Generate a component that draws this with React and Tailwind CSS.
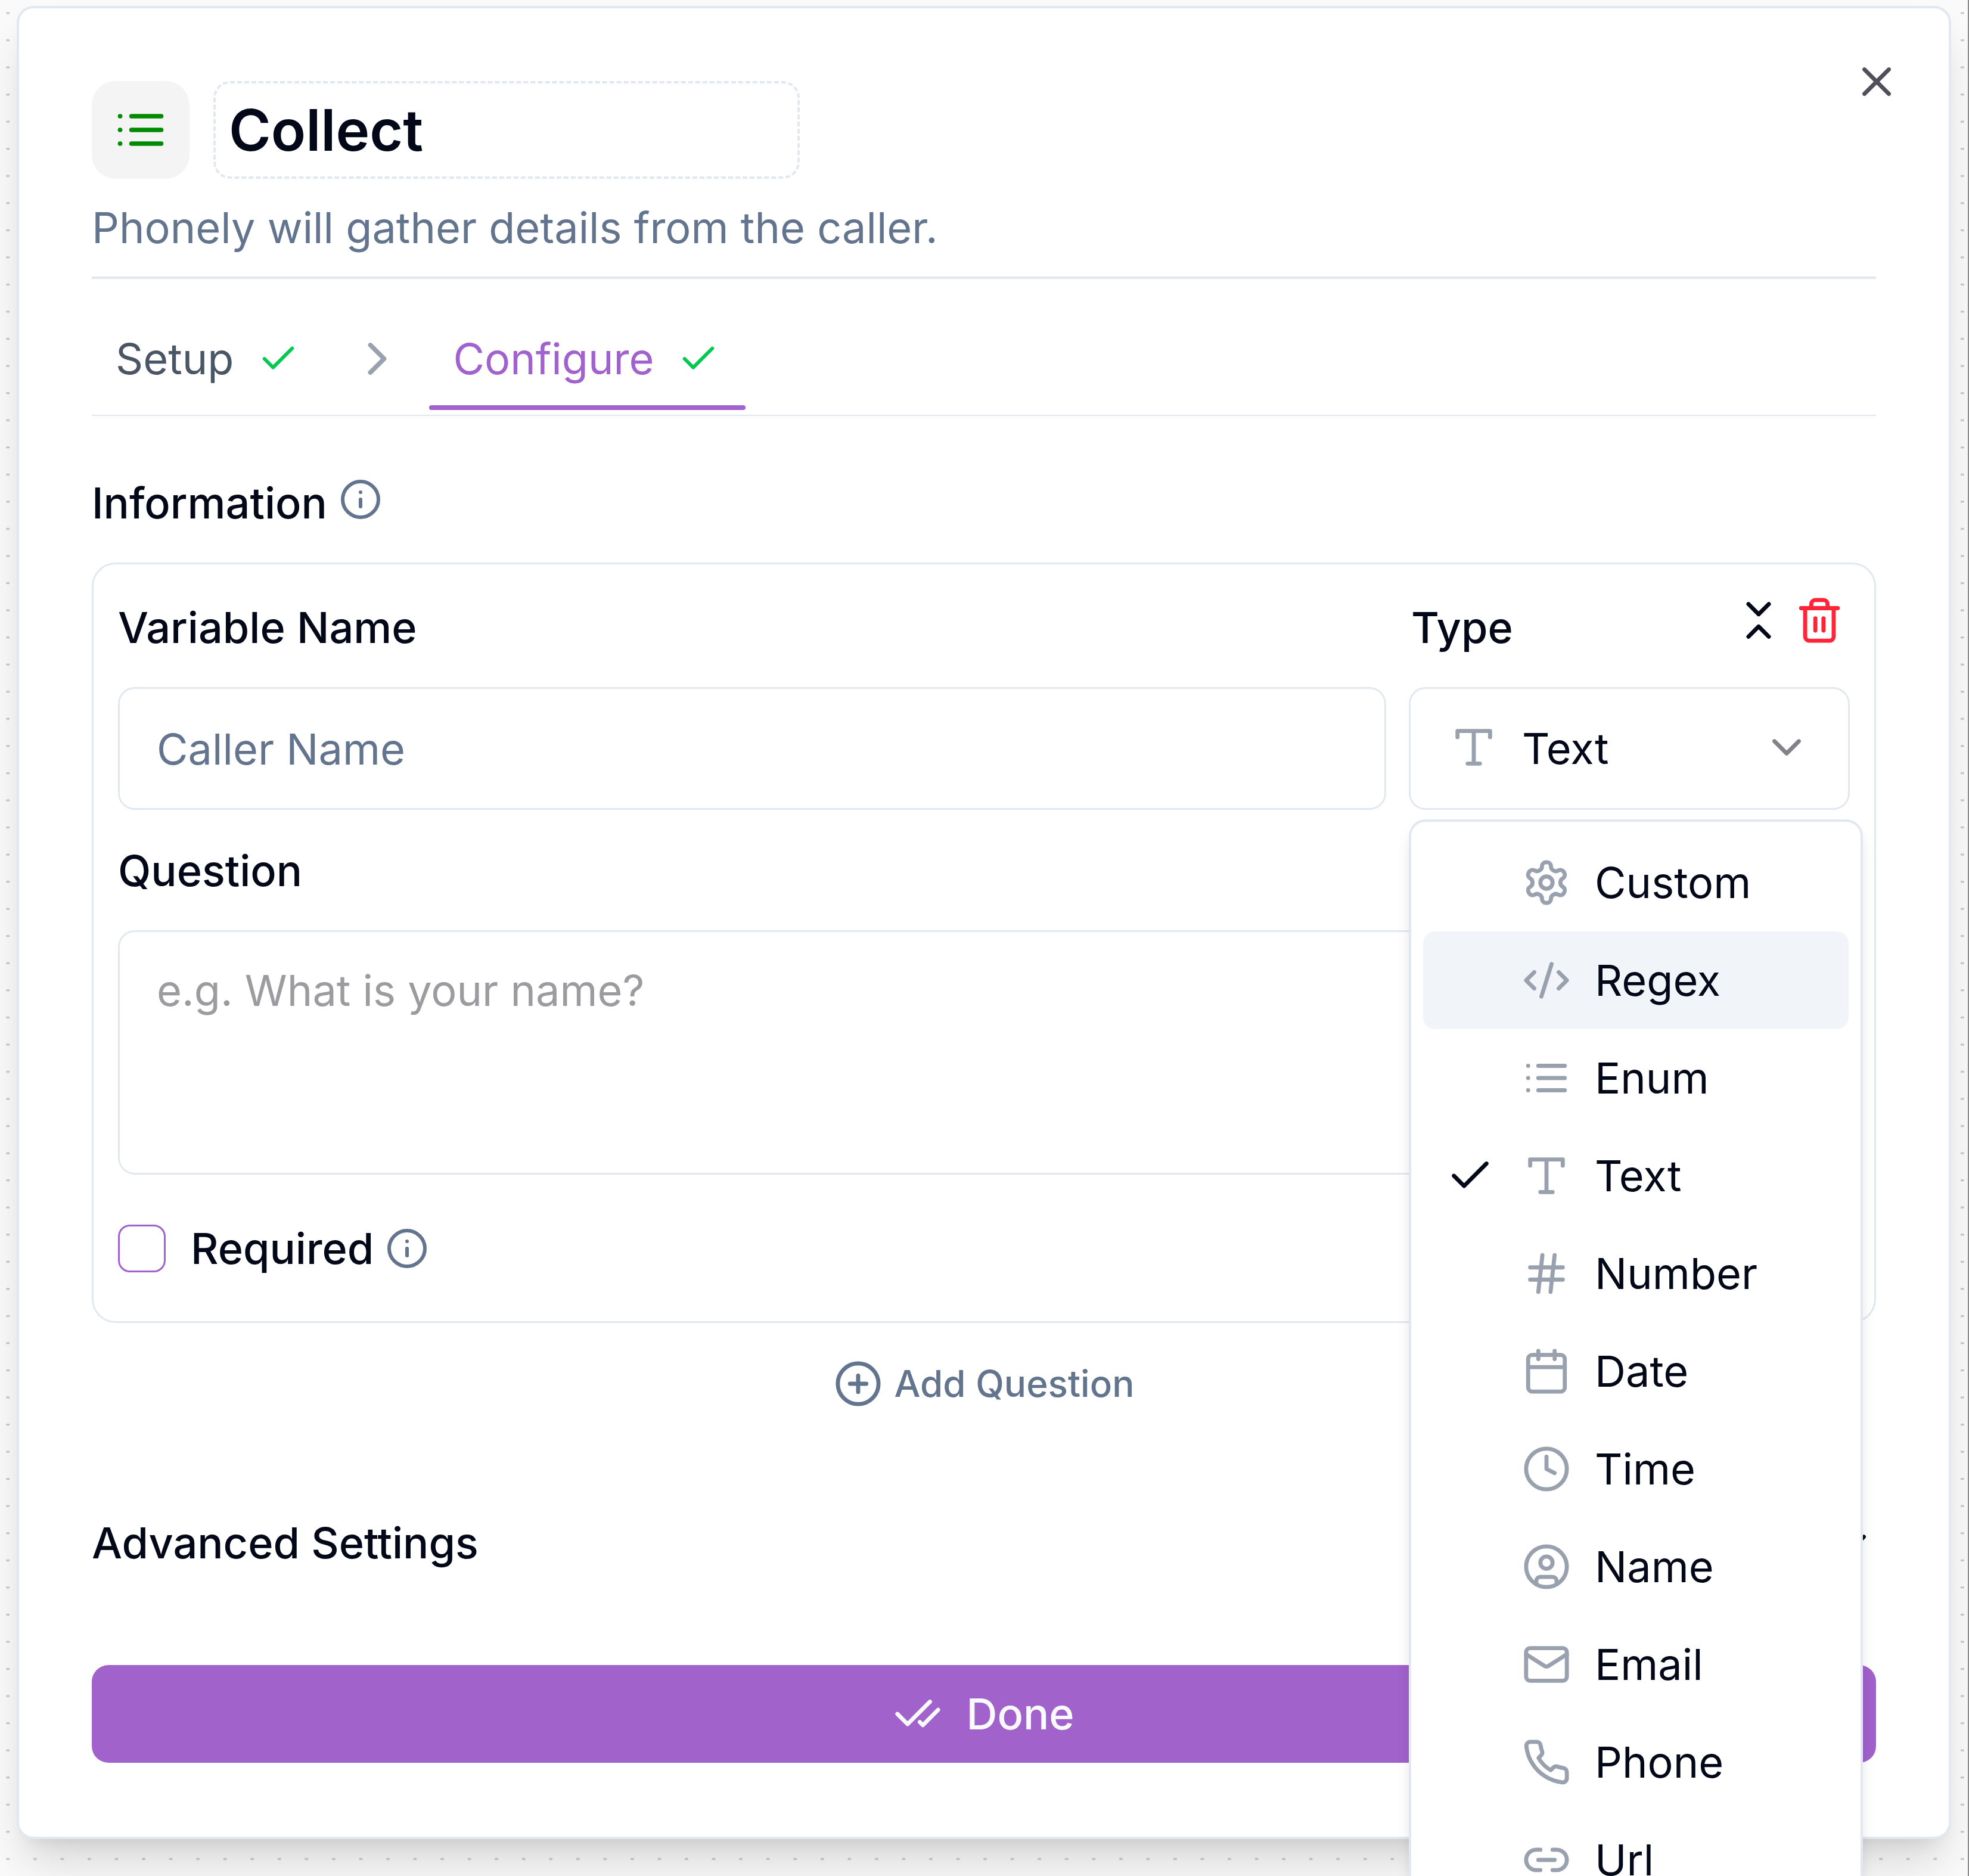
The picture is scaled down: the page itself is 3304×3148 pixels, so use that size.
import React, { useState } from "react";
import {
  Calendar,
  Check,
  CheckCheck,
  ChevronDown,
  ChevronRight,
  ChevronsDownUp,
  CirclePlus,
  CircleUser,
  Clock,
  CodeXml,
  Hash,
  Info,
  Link2,
  Mail,
  Trash2,
  X,
} from "lucide-react";

// Shared svg wrapper for the icons drawn by hand
const Icon = ({ className, children }) => (
  <svg
    viewBox="0 0 24 24"
    fill="none"
    stroke="currentColor"
    strokeWidth="2"
    strokeLinecap="round"
    strokeLinejoin="round"
    className={className}
    aria-hidden="true"
  >
    {children}
  </svg>
);

const ListIcon = ({ className }) => (
  <Icon className={className}>
    <path d="M3 6h.01M3 12h.01M3 18h.01M8 6h13M8 12h13M8 18h13" />
  </Icon>
);

const TypeIcon = ({ className }) => (
  <Icon className={className}>
    <path d="M4 7V4h16v3M9 20h6M12 4v16" />
  </Icon>
);

const GearIcon = ({ className }) => (
  <Icon className={className}>
    <path d="M12.22 2h-.44a2 2 0 0 0-2 2v.18a2 2 0 0 1-1 1.73l-.43.25a2 2 0 0 1-2 0l-.15-.08a2 2 0 0 0-2.73.73l-.22.38a2 2 0 0 0 .73 2.73l.15.1a2 2 0 0 1 1 1.72v.51a2 2 0 0 1-1 1.74l-.15.09a2 2 0 0 0-.73 2.73l.22.38a2 2 0 0 0 2.73.73l.15-.08a2 2 0 0 1 2 0l.43.25a2 2 0 0 1 1 1.73V20a2 2 0 0 0 2 2h.44a2 2 0 0 0 2-2v-.18a2 2 0 0 1 1-1.73l.43-.25a2 2 0 0 1 2 0l.15.08a2 2 0 0 0 2.73-.73l.22-.39a2 2 0 0 0-.73-2.73l-.15-.08a2 2 0 0 1-1-1.74v-.5a2 2 0 0 1 1-1.74l.15-.09a2 2 0 0 0 .73-2.73l-.22-.38a2 2 0 0 0-2.73-.73l-.15.08a2 2 0 0 1-2 0l-.43-.25a2 2 0 0 1-1-1.73V4a2 2 0 0 0-2-2z" />
    <circle cx="12" cy="12" r="3" />
  </Icon>
);

const PhoneIcon = ({ className }) => (
  <Icon className={className}>
    <path d="M22 16.92v3a2 2 0 0 1-2.18 2 19.79 19.79 0 0 1-8.63-3.07 19.5 19.5 0 0 1-6-6 19.79 19.79 0 0 1-3.07-8.67A2 2 0 0 1 4.11 2h3a2 2 0 0 1 2 1.72 12.84 12.84 0 0 0 .7 2.81 2 2 0 0 1-.45 2.11L8.09 9.91a16 16 0 0 0 6 6l1.27-1.27a2 2 0 0 1 2.11-.45 12.84 12.84 0 0 0 2.81.7A2 2 0 0 1 22 16.92z" />
  </Icon>
);

const types = [
  { name: "Custom", icon: GearIcon },
  { name: "Regex", icon: CodeXml },
  { name: "Enum", icon: ListIcon },
  { name: "Text", icon: TypeIcon },
  { name: "Number", icon: Hash },
  { name: "Date", icon: Calendar },
  { name: "Time", icon: Clock },
  { name: "Name", icon: CircleUser },
  { name: "Email", icon: Mail },
  { name: "Phone", icon: PhoneIcon },
  { name: "Url", icon: Link2 },
];

// Dotted canvas behind the dialog
const Dots = () => (
  <svg className="absolute inset-0 h-full w-full" aria-hidden="true">
    <defs>
      <pattern
        id="dots"
        x="-9.5"
        y="-0.5"
        width="45.55"
        height="45.55"
        patternUnits="userSpaceOnUse"
      >
        <rect x="20" y="21" width="5.5" height="3" fill="#c4c4c4" />
      </pattern>
    </defs>
    <rect width="100%" height="100%" fill="url(#dots)" />
  </svg>
);

const TypeSelect = () => {
  const [type, setType] = useState("Text");
  const [hovered, setHovered] = useState("Regex");
  const [open, setOpen] = useState(true);
  const Selected = types.find((t) => t.name === type).icon;

  // Open our own menu instead of the native one
  const handleMouseDown = (e) => {
    e.preventDefault();
    setOpen(!open);
  };

  return (
    <div className="relative">
      <select
        id="type"
        value={type}
        onChange={(e) => setType(e.target.value)}
        onMouseDown={handleMouseDown}
        className="block h-[206px] w-full appearance-none rounded-[28px] border-[3px] border-slate-200 bg-white pl-[187px] text-[72px] text-[#020817] outline-none"
      >
        {types.map((t) => (
          <option key={t.name}>{t.name}</option>
        ))}
      </select>
      <Selected className="pointer-events-none absolute top-[60px] left-[68px] size-[82px] text-gray-400" />
      <ChevronDown className="pointer-events-none absolute top-[60px] right-[65px] size-[82px] text-[#818389]" />

      {open && (
        <ul
          role="listbox"
          aria-label="Type"
          className="absolute top-full left-0 z-10 mt-4 w-[762px] rounded-[28px] border-4 border-slate-200 bg-white p-5 shadow-[0_20px_30px_-5px_rgba(0,0,0,0.1),0_10px_20px_-10px_rgba(0,0,0,0.1)]"
        >
          {types.map(({ name, icon: TypeGlyph }) => (
            <li
              key={name}
              role="option"
              aria-selected={name === type}
              onMouseEnter={() => setHovered(name)}
              onClick={() => {
                setType(name);
                setOpen(false);
              }}
              className={
                name === hovered
                  ? "flex h-[164px] items-center gap-10 rounded-[20px] bg-slate-100 px-[38px]"
                  : "flex h-[164px] items-center gap-10 rounded-[20px] px-[38px]"
              }
            >
              <span className="w-[88px]">
                {name === type && <Check className="size-[82px]" />}
              </span>
              <TypeGlyph className="size-[82px] text-gray-400" />
              {name}
            </li>
          ))}
        </ul>
      )}
    </div>
  );
};

const App = () => {
  return (
    <main className="relative min-h-screen overflow-hidden border-r-2 border-[#8c8c8c] bg-[#fafafa] pt-[10px] pr-7 pb-[62px] pl-7 font-['Inter',sans-serif] text-[72px] leading-[100px] text-[#020817]">
      <Dots />
      <section className="relative rounded-[28px] border-4 border-slate-200 bg-white px-[122px] pt-[122px] pb-[124px] shadow-[0_50px_75px_-15px_rgba(0,0,0,0.15),0_20px_30px_-20px_rgba(0,0,0,0.1)]">
        <button
          aria-label="Close"
          className="absolute top-[82px] right-20 text-[#50505c]"
        >
          <X className="size-[82px]" />
        </button>

        {/* Header */}
        <header className="border-b-4 border-slate-200 pb-8">
          <div className="flex items-center gap-10">
            <div className="flex size-[164px] items-center justify-center rounded-[40px] bg-[#f4f4f4]">
              <ListIcon className="size-[92px] text-[#008a00]" />
            </div>
            <input
              aria-label="Step name"
              defaultValue="Collect"
              className="h-[164px] w-[984px] rounded-[28px] border-4 border-dashed border-slate-200 px-[22px] text-[96px] font-semibold outline-none"
            />
          </div>
          <p className="mt-8 text-slate-500">
            Phonely will gather details from the caller.
          </p>
        </header>

        {/* Steps */}
        <nav className="flex items-center gap-[41px] border-b-2 border-slate-200 pt-[40px] pb-2">
          <a
            href="#setup"
            className="flex items-center gap-10 pt-11 pr-11 pb-9 pl-10 text-gray-600"
          >
            Setup
            <Check className="size-[70px] text-[#00c950]" />
          </a>
          <ChevronRight className="mt-2 size-[92px] text-gray-400" />
          <a
            href="#configure"
            aria-current="step"
            className="relative flex items-center gap-10 pt-11 pr-11 pb-9 pl-10 text-[#a162cf]"
          >
            Configure
            <Check className="size-[70px] text-[#00c950]" />
            <span className="absolute inset-x-0 bottom-0 h-2 rounded-sm bg-[#a162cf]" />
          </a>
        </nav>

        {/* Information */}
        <h2 className="mt-24 flex items-center gap-5 font-medium">
          Information
          <Info className="mb-3 size-[72px] text-slate-500" />
        </h2>

        <div className="mt-[50px] rounded-[40px] border-[3px] border-slate-200 px-[41px] pt-[56px] pb-[72px]">
          <div className="grid grid-cols-[1fr_740px] gap-x-[38px]">
            <div>
              <label htmlFor="variable" className="block font-medium">
                Variable Name
              </label>
              <input
                id="variable"
                defaultValue="Caller Name"
                className="mt-[50px] block h-[206px] w-full rounded-[28px] border-[3px] border-slate-200 px-[62px] text-slate-500 outline-none"
              />
            </div>
            <div>
              <div className="mb-[50px] flex h-[100px] items-center justify-between pr-[10px] pl-1">
                <label htmlFor="type" className="font-medium">
                  Type
                </label>
                <div className="flex gap-5 pb-6">
                  <button aria-label="Collapse">
                    <ChevronsDownUp className="size-[82px]" />
                  </button>
                  <button aria-label="Delete" className="text-[#ff2438]">
                    <Trash2 className="size-[82px]" />
                  </button>
                </div>
              </div>
              <TypeSelect />
            </div>
          </div>

          <label htmlFor="question" className="mt-[52px] block font-medium">
            Question
          </label>
          <textarea
            id="question"
            placeholder="e.g. What is your name?"
            className="mt-[50px] block h-[410px] w-full resize-none rounded-[28px] border-[3px] border-slate-200 px-[62px] py-[48px] outline-none placeholder:text-[#9b9ba0]"
          />

          <div className="mt-[74px] flex items-center">
            <input
              id="required"
              type="checkbox"
              className="size-[80px] appearance-none rounded-[20px] border-[3px] border-[#a162cf]"
            />
            <label htmlFor="required" className="ml-[42px] font-medium">
              Required
            </label>
            <Info className="ml-5 size-[72px] text-slate-500" />
          </div>
        </div>

        <button className="mx-auto mt-[61px] flex items-center gap-5 text-[62px] leading-[82px] font-medium text-slate-500">
          <CirclePlus className="size-[82px]" />
          Add Question
        </button>

        <button className="mt-[176px] flex w-full items-center justify-between font-medium">
          Advanced Settings
          <ChevronDown className="size-[82px]" />
        </button>

        <button className="mt-[155px] flex h-[164px] w-full items-center justify-center gap-10 rounded-[28px] bg-[#a162cb] font-medium text-slate-50">
          <CheckCheck className="size-[82px]" />
          Done
        </button>
      </section>
    </main>
  );
};

export default App;
